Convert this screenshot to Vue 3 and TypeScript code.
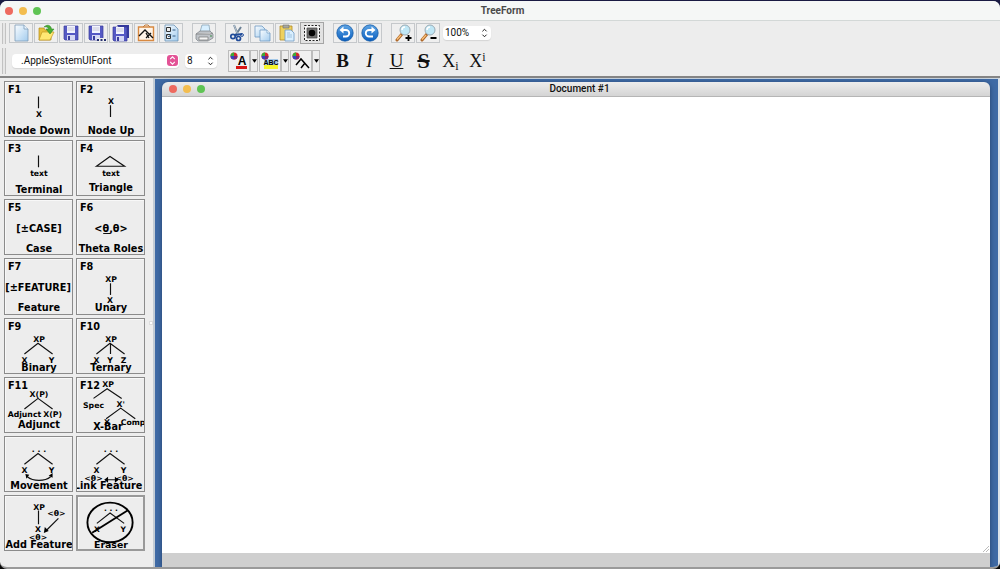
<script setup lang="ts">
import { ref } from 'vue'

interface Tool { name: string; art: string; gap?: boolean; pressed?: boolean }
interface Label { x: number; y: number; t: string; s?: 'big'; start?: boolean }
interface Cell { name: string; key?: string; labels: Label[]; path?: string; extra?: string; caption: Label; pressed?: boolean }

const disk = '<path d="M5 3h14v14H6l-1-1z" fill="#5559c4" stroke="#3a3e9c" stroke-width=".7"/><path d="M8 3h8v7H8z" fill="#f2f4ff"/><path d="M8.500 5h7M8.500 7h7" stroke="#aab" stroke-width=".6"/><path d="M8 12h8v5H8z" fill="#d5d8f4"/><path d="M9 13h2v4H9z" fill="#3a3e9c"/>'
const lens = '<path d="M11 11l-5 6" stroke="#b06a2c" stroke-width="3" stroke-linecap="round"/><path d="M10 12l-4 4.500" stroke="#f8c07a" stroke-width="1.300"/><circle cx="14" cy="7" r="5" fill="#bfe7f6" stroke="#9aabb5"/><path d="M11 7a3 3 0 013-3" stroke="#fff" stroke-width="1.500" fill="none"/>'
const orb = '<circle cx="12" cy="10" r="8.200" fill="url(#orb)" stroke="#0b53a0" stroke-width=".7"/>'

const tools: Tool[] = [
  { name: 'New', art: '<path d="M6 2h9l4 4v12H6z" fill="url(#sheet)" stroke="#7f9db8" stroke-width=".8"/><path d="M15 2v4h4" fill="#e9f5ff" stroke="#7f9db8" stroke-width=".8"/>' },
  { name: 'Open', art: '<path d="M5 5h5l1 2h6v10H5z" fill="#e9c23e" stroke="#b68b19" stroke-width=".7"/><path d="M5 17l3-8h12l-4 8z" fill="#ffe873" stroke="#c29a22" stroke-width=".7"/><path d="M10 4c3-3 7-2 7.500 2h2.500L16 11l-4-5h2.500c-.5-2-2-2.500-4.500-2z" fill="#48ae35" stroke="#27801e" stroke-width=".5"/>' },
  { name: 'Save', art: disk },
  { name: 'Save as', art: disk + '<path d="M13 15h9v4h-9z" fill="#eee"/><path d="M13 16h2v2h-2zM16.500 16h2v2h-2zM20 16h2v2h-2z" fill="#26306f"/>' },
  { name: 'Save all', art: '<path d="M8 2h12v13h-3z" fill="#353a9d"/><g transform="translate(-1 1)">' + disk + '</g>' },
  { name: 'Save image', art: '<path d="M4.500 4h15v13.500h-15z" fill="#fff4e8" stroke="#d88941" stroke-width="1.400"/><path d="M9 4l2-2h3l2 2" fill="none" stroke="#c17a3a"/><path d="M5 13l6-6 8 8M17 10l-5 5M12 10l3 5" fill="none" stroke="#111" stroke-width="1.300"/>' },
  { name: 'Properties', art: '<path d="M6 2h9l4 4v12H6z" fill="url(#sheet)" stroke="#6b92b5" stroke-width=".8"/><path d="M7.500 4.500h4v4h-4zM7.500 11.500h4v4h-4z" fill="#eee" stroke="#333"/><path d="M13.500 7h3M13.500 13h3M8.500 12.500l1.500 1.500 2-3" fill="none" stroke="#345d85"/>' },
  { name: 'Print', gap: true, art: '<path d="M8 9l2-7h7l1 7z" fill="#d7efff" stroke="#7e9caf" stroke-width=".7"/><path d="M4 11l4-3h10l3 3v4l-5 3H6l-2-2z" fill="#bfc3c8" stroke="#7a8085" stroke-width=".7"/><path d="M4 11h14l3-1M7 14h9v3H7z" fill="#f5f5f5" stroke="#777" stroke-width=".7"/><path d="M18 13h2" stroke="#368b45"/>' },
  { name: 'Cut', gap: true, art: '<path d="M9 2l4 10M16 4l-6 9" stroke="#6b8095" stroke-width="2"/><path d="M9 2l4 10" stroke="#d9e3eb" stroke-width=".7"/><circle cx="8" cy="13.500" r="2.200" fill="none" stroke="#214c9a" stroke-width="1.700"/><circle cx="13.500" cy="15.500" r="2" fill="none" stroke="#214c9a" stroke-width="1.700"/><path d="M10 12l7-1" stroke="#214c9a" stroke-width="2"/><circle cx="17" cy="12" r="1.400" fill="none" stroke="#214c9a"/>' },
  { name: 'Copy', art: '<path d="M5 3h7l3 3v8H5z" fill="url(#sheet)" stroke="#6e9bc3" stroke-width=".8"/><path d="M10 7h7l3 3v8H10z" fill="url(#sheet)" stroke="#6e9bc3" stroke-width=".8"/><path d="M17 7v3h3" fill="#fff" stroke="#6e9bc3" stroke-width=".7"/>' },
  { name: 'Paste', art: '<path d="M5 3h12v14H5z" fill="#eed15e" stroke="#b18a27" stroke-width=".8"/><path d="M8 2h6v3H8z" fill="#a8a8a0" stroke="#70706a" stroke-width=".6"/><path d="M10 7h6l3 3v8h-9z" fill="#d9efff" stroke="#6e9bc3" stroke-width=".8"/><path d="M12 10h3M12 12h5M12 14h5" stroke="#8bb1d1" stroke-width=".7"/>' },
  { name: 'Select all', pressed: true, art: '<path d="M4.500 2.500h15v15h-15z" fill="#f5f5f5" stroke="#222" stroke-dasharray="2 1.500"/><path d="M7 5h10v10H7z" fill="#727272" stroke="#444" stroke-width=".7"/><circle cx="12" cy="10" r="3.300" fill="#050505"/>' },
  { name: 'Undo', gap: true, art: orb + '<path d="M9 7h4a3.200 3.200 0 010 6.500h-3" fill="none" stroke="#fff" stroke-width="1.800"/><path d="M10.500 3.500v7L6.500 7z" fill="#fff"/>' },
  { name: 'Redo', art: orb + '<path d="M15 7h-4a3.200 3.200 0 000 6.500h4" fill="none" stroke="#fff" stroke-width="1.800"/><path d="M13.500 3.500v7l4-3.500z" fill="#fff"/>' },
  { name: 'Zoom in', gap: true, art: lens + '<path d="M17.500 12v6M14.500 15h6" stroke="#000" stroke-width="1.800"/>' },
  { name: 'Zoom out', art: lens + '<path d="M14.500 15h6" stroke="#000" stroke-width="1.800"/>' },
]

const wheel = '<circle cx="5" cy="5" r="3.500" fill="#d52a2a"/><path d="M5 5V1.500A3.500 3.500 0 001.500 5z" fill="#3caa38"/><path d="M5 5H1.500A3.500 3.500 0 005 8.500z" fill="#3545bd"/><path d="M5 5v3.500A3.500 3.500 0 008.500 5z" fill="#7c267c"/>'
const colourTools = [
  { name: 'Text colour', art: wheel + '<path d="M7 15h11v3H7z" fill="#d81515"/>', text: 'A', size: 12, x: 13, y: 14 },
  { name: 'Highlight colour', art: '<path d="M4 8h14v6H4z" fill="#a4c8e8"/><path d="M4 14h14v4H4z" fill="#f5f52b"/>' + wheel, text: 'ABC', size: 7, x: 11, y: 14 },
  { name: 'Line colour', art: wheel + '<path d="M5 14l5-6 8 9M14 12l-4 5" fill="none" stroke="#000" stroke-width="1.500"/>', text: '', size: 10, x: 0, y: 0 },
]

const formats = [
  { name: 'Bold', cls: 'b', text: 'B' },
  { name: 'Italic', cls: 'i', text: 'I' },
  { name: 'Underline', cls: 'u', text: 'U' },
  { name: 'Strikethrough', cls: 's', text: 'S' },
]

const cells: Cell[] = [
  { name: 'Node Down', key: 'F1', path: 'M34.500 15v12', labels: [{ x: 35, y: 36, t: 'X' }], caption: { x: 35, y: 54, t: 'Node Down' } },
  { name: 'Node Up', key: 'F2', path: 'M34.500 24v12', labels: [{ x: 35, y: 23, t: 'X' }], caption: { x: 35, y: 54, t: 'Node Up' } },
  { name: 'Terminal', key: 'F3', path: 'M34.500 15v12', labels: [{ x: 35, y: 36, t: 'text' }], caption: { x: 35, y: 54, t: 'Terminal' } },
  { name: 'Triangle', key: 'F4', path: 'M20 26l14-10 15 10z', labels: [{ x: 35, y: 36, t: 'text' }], caption: { x: 35, y: 52, t: 'Triangle' } },
  { name: 'Case', key: 'F5', labels: [{ x: 35, y: 33, t: '[±CASE]' }].map((l) => ({ ...l, s: 'big' as const })), caption: { x: 35, y: 54, t: 'Case' } },
  { name: 'Theta Roles', key: 'F6', path: 'M27 34.500h7', labels: [{ x: 35, y: 33, t: '<θ,θ>', s: 'big' }], caption: { x: 35, y: 54, t: 'Theta Roles' } },
  { name: 'Feature', key: 'F7', labels: [{ x: 34, y: 33, t: '[±FEATURE]', s: 'big' }], caption: { x: 35, y: 54, t: 'Feature' } },
  { name: 'Unary', key: 'F8', path: 'M34.500 25v12', labels: [{ x: 35, y: 24, t: 'XP' }, { x: 34, y: 45, t: 'X' }], caption: { x: 35, y: 54, t: 'Unary' } },
  { name: 'Binary', key: 'F9', path: 'M20 36l14-11 15 11', labels: [{ x: 35, y: 24, t: 'XP' }, { x: 20, y: 45, t: 'X' }, { x: 48, y: 45, t: 'Y' }], caption: { x: 35, y: 54, t: 'Binary' } },
  { name: 'Ternary', key: 'F10', path: 'M20 36l14-11 15 11M34.500 25v11', labels: [{ x: 35, y: 24, t: 'XP' }, { x: 20, y: 45, t: 'X' }, { x: 34, y: 45, t: 'Y' }, { x: 48, y: 45, t: 'Z' }], caption: { x: 35, y: 54, t: 'Ternary' } },
  { name: 'Adjunct', key: 'F11', path: 'M20 32l14-11 15 11', labels: [{ x: 35, y: 20, t: 'X(P)' }, { x: 20, y: 40, t: 'Adjunct' }, { x: 49, y: 40, t: 'X(P)' }], caption: { x: 35, y: 52, t: 'Adjunct' } },
  { name: 'X-Bar', key: 'F12', path: 'M17 21l14-10 15 10M30 42l15-11 15 11', labels: [{ x: 32, y: 9, t: 'XP' }, { x: 17, y: 31, t: 'Spec' }, { x: 45, y: 30, t: 'X\'' }, { x: 31, y: 48, t: 'X' }, { x: 45, y: 48, t: 'Comp', start: true }], caption: { x: 32, y: 54, t: 'X-Bar' } },
  { name: 'Movement', path: 'M20 28l14-11 15 11M23 41c6 5 18 5 24 0', extra: 'M21 38l4 1-3 4zM49 37v5l-4-2z', labels: [{ x: 35, y: 15, t: '. . .' }, { x: 20, y: 37, t: 'X' }, { x: 48, y: 37, t: 'Y' }], caption: { x: 35, y: 54, t: 'Movement' } },
  { name: 'Link Feature', path: 'M20 28l14-11 15 11M30 44h11', extra: 'M28 44l4-3v6zM43 44l-4-3v6z', labels: [{ x: 35, y: 15, t: '. . .' }, { x: 20, y: 37, t: 'X' }, { x: 48, y: 37, t: 'Y' }, { x: 17, y: 45, t: '<θ>' }, { x: 49, y: 45, t: '<θ>' }], caption: { x: 32, y: 54, t: 'Link Feature' } },
  { name: 'Add Feature', path: 'M34.500 15v14M55 23L43 35', extra: 'M40 38l1-6 4 4z', labels: [{ x: 35, y: 14, t: 'XP' }, { x: 34, y: 37, t: 'X' }, { x: 34, y: 45, t: '<θ>' }, { x: 53, y: 21, t: '<θ>' }], caption: { x: 35, y: 54, t: 'Add Feature' } },
  { name: 'Eraser', pressed: true, path: 'M20 28l14-11 15 11', labels: [{ x: 35, y: 15, t: '. . .' }, { x: 20, y: 37, t: 'X' }, { x: 48, y: 37, t: 'Y' }], caption: { x: 35, y: 54, t: 'Eraser' } },
]

const font = ref('.AppleSystemUIFont')
const size = ref('8')
const zoom = ref('100%')
</script>

<template>
  <div class="desk">
    <svg class="defs" aria-hidden="true">
      <defs>
        <linearGradient id="sheet" x1="0" y1="0" x2="1" y2="1"><stop offset="0" stop-color="#fafdff" /><stop offset="1" stop-color="#a3ccee" /></linearGradient>
        <linearGradient id="orb" x1="0" y1="0" x2="0" y2="1"><stop offset="0" stop-color="#5fa5e4" /><stop offset="1" stop-color="#0a5fc0" /></linearGradient>
      </defs>
    </svg>
    <main class="app">
      <header class="title">
        <div class="lights"><i class="red"></i><i class="amber"></i><i class="green"></i></div>
        <h1>TreeForm</h1>
      </header>

      <div class="bars">
        <div class="bar">
          <span class="grip"></span>
          <button v-for="t in tools" :key="t.name" class="tool" :class="{ gap: t.gap, pressed: t.pressed }" :aria-label="t.name">
            <svg viewBox="1 1 22 18" v-html="t.art"></svg>
          </button>
          <span class="pick zoom">
            <select v-model="zoom" aria-label="Zoom"><option>100%</option><option>200%</option></select>
            <svg viewBox="0 0 8 12"><path d="M1.500 4L4 1.500 6.500 4M1.500 8L4 10.500 6.500 8" /></svg>
          </span>
        </div>
        <div class="bar">
          <span class="grip"></span>
          <span class="pick font">
            <select v-model="font" aria-label="Font"><option>.AppleSystemUIFont</option></select>
            <svg viewBox="0 0 8 12"><path d="M1.500 4.500L4 2 6.500 4.500M1.500 7.500L4 10 6.500 7.500" /></svg>
          </span>
          <span class="pick size">
            <select v-model="size" aria-label="Font size"><option>8</option><option>10</option><option>12</option></select>
            <svg viewBox="0 0 8 12"><path d="M1.500 4L4 1.500 6.500 4M1.500 8L4 10.500 6.500 8" /></svg>
          </span>
          <div class="colours">
            <template v-for="c in colourTools" :key="c.name">
              <button class="colour" :aria-label="c.name">
                <svg viewBox="0 0 20 20"><g v-html="c.art"></g><text v-if="c.text" :x="c.x" :y="c.y" :font-size="c.size">{{ c.text }}</text></svg>
              </button>
              <button class="arrow" :aria-label="c.name + ' menu'"><svg viewBox="0 0 6 4"><path d="M0 0h6L3 4z" /></svg></button>
            </template>
          </div>
          <div class="formats">
            <button v-for="f in formats" :key="f.name" :class="f.cls" :aria-label="f.name">{{ f.text }}</button>
            <button class="script" aria-label="Subscript">X<sub>i</sub></button>
            <button class="script" aria-label="Superscript">X<sup>i</sup></button>
          </div>
        </div>
      </div>

      <div class="work">
        <aside class="palette">
          <button v-for="c in cells" :key="c.name" class="cell" :class="{ pressed: c.pressed }" :aria-label="c.name">
            <svg viewBox="0 0 69 56" preserveAspectRatio="xMidYMin slice">
              <text v-if="c.key" class="caption start" x="3" y="11">{{ c.key }}</text>
              <path v-if="c.path" class="line" :d="c.path" />
              <path v-if="c.extra" :d="c.extra" />
              <text v-for="(l, n) in c.labels" :key="n" :x="l.x" :y="l.y" :class="[l.s, { start: l.start }]">{{ l.t }}</text>
              <g v-if="c.name === 'Eraser'" class="ban"><ellipse cx="34" cy="27" rx="24" ry="21" /><path d="M15 38L53 14" /></g>
              <text class="caption" :x="c.caption.x" :y="c.caption.y">{{ c.caption.t }}</text>
            </svg>
          </button>
        </aside>
        <div class="divider"><i></i></div>
        <section class="canvas">
          <article class="doc">
            <header>
              <div class="lights"><i class="red"></i><i class="amber"></i><i class="green"></i></div>
              <h2>Document #1</h2>
            </header>
            <div class="page">
              <svg viewBox="0 0 8 8"><path d="M1 7l6-6M4 7l3-3" /></svg>
            </div>
            <footer></footer>
          </article>
        </section>
      </div>
    </main>
  </div>
</template>

<style>
body { margin: 0; }
</style>

<style scoped>
* { box-sizing: border-box; }
.desk { height: 100vh; padding-top: 1px; background: linear-gradient(#1a1b43 60%, #080808 90%); font-family: "Noto Sans", sans-serif; color: #111; }
.defs { position: absolute; width: 0; height: 0; }
.app { display: flex; flex-direction: column; height: 100%; overflow: hidden; border-radius: 7px; background: #ededed; border-bottom: 2px solid #9a9a9a; }
button { padding: 0; margin: 0; font: inherit; color: inherit; background: none; border: 0; }
svg { display: block; }
h1, h2 { margin: 0; }
.title { display: grid; grid-template-columns: 1fr auto 1fr; align-items: center; height: 20px; flex: none; padding-left: 5px; background: #f5f7f6; border-bottom: 1px solid #d3d8d7; }
.title h1 { font: 700 10px/18px Roboto, sans-serif; color: #4a4a4a; }
.lights { display: flex; gap: 6px; }
.lights i { width: 8px; height: 8px; border-radius: 50%; }
.red { background: #ee6a5f; }
.amber { background: #f3bd4f; }
.green { background: #5fc454; }
.bars { flex: none; padding: 0 2px; border-bottom: 2px solid #858585; }
.bar { display: flex; align-items: center; height: 24px; }
.bar + .bar { height: 31px; }
.grip { flex: none; width: 4px; height: 21px; margin-right: 3px; border: 1px solid #c2c2c2; border-width: 0 1px; background: #e6e6e6; }
.bar + .bar .grip { height: 26px; }
.tool { flex: none; width: 24px; height: 20px; margin-right: 1px; border: 1px solid #c5c8cb; background: #efefef; }
.tool svg { width: 22px; height: 18px; }
.tool.gap { margin-left: 8px; }
.tool.pressed { width: 24px; height: 22px; border-color: #a5a5a5; background: #e2e2e2; }
.tool.pressed svg { height: 20px; }
.pick { position: relative; display: flex; flex: none; align-items: center; }
.pick select { width: 100%; height: 14px; padding: 0 0 0 2px; border: 0; border-radius: 4px; background: #fff; appearance: none; font: 10px/14px Roboto, sans-serif; color: #111; box-shadow: 0 1px 1px #d4d4d4; }
.pick svg { position: absolute; right: 3px; width: 7px; height: 10px; pointer-events: none; }
.pick path { fill: none; stroke: #222; stroke-width: 1.2; }
.zoom { width: 48px; margin-left: 2px; }
.font { width: 167px; margin-left: 3px; }
.pick.font select { padding-left: 9px; }
.font svg { right: 1px; width: 11px; height: 11px; border-radius: 3px; background: #e35396; }
.font path { stroke: #fff; }
.size { width: 32px; margin-left: 6px; }
.colours { display: flex; flex: none; margin-left: 11px; }
.colour { width: 22px; height: 22px; border: 1px solid #bcbcbc; background: #f0f0f0; }
.colour text { font-family: "Liberation Sans", sans-serif; font-weight: 700; text-anchor: middle; }
.arrow { display: flex; align-items: center; justify-content: center; width: 8px; height: 22px; margin-right: 1px; border: 1px solid #bcbcbc; }
.arrow svg { width: 5px; height: 4px; flex: none; }
.formats { display: flex; margin-left: 8px; font: 19px/24px "Liberation Serif", serif; }
.formats button { width: 27px; height: 24px; white-space: nowrap; }
.formats .b { font-weight: 700; }
.formats .i { font-style: italic; }
.formats .u { text-decoration: underline; text-decoration-thickness: 1px; }
.formats .s { font-size: 22px; font-weight: 700; text-decoration: line-through; text-decoration-thickness: 2px; }
.formats .script { font-size: 18px; }
sub, sup { font-size: 12px; line-height: 0; }
sub { vertical-align: -3px; }
sup { vertical-align: 6px; }
.work { display: flex; flex: 1; min-height: 0; }
.palette { display: grid; flex: none; width: 149px; padding: 3px 4px 16px; grid-template-columns: 1fr 1fr; grid-template-rows: repeat(8, 1fr); gap: 3px; }
.cell { min-height: 0; overflow: hidden; border: 1px solid #8b8b8b; box-shadow: inset 1px 1px #f8f8f8; }
.cell.pressed { border-width: 2px; border-color: #999; }
.cell svg { width: 100%; height: 100%; }
.cell text { font-family: "DejaVu Sans", sans-serif; font-size: 8px; font-weight: 700; text-anchor: middle; }
.cell .caption, .cell .big { font-size: 10px; }
.cell .start { text-anchor: start; }
.line { fill: none; stroke: #111; stroke-width: 1.2; }
.ban { fill: none; stroke: #000; stroke-width: 2; }
.divider { display: flex; align-items: center; flex: none; width: 6px; border-right: 2px solid #c3ccd5; }
.divider i { width: 4px; height: 4px; border: 1px solid #ddd; background: #fff; }
.canvas { flex: 1; min-width: 0; padding: 3px 8px 0 7px; border-top: 1px solid #c9d4df; border-right: 2px solid #dce3ea; background: #3f6aa5; }
.doc { display: flex; flex-direction: column; height: 100%; border-radius: 6px 6px 0 0; overflow: hidden; box-shadow: 0 1px 5px #24406c; }
.doc header { display: grid; grid-template-columns: 1fr auto 1fr; align-items: center; flex: none; height: 15px; padding-left: 7px; border-bottom: 1px solid #b5b5b5; background: linear-gradient(#ececec, #d4d4d4); }
.doc h2 { font: 500 10px/14px Roboto, sans-serif; }
.page { display: flex; flex: 1; align-items: flex-end; justify-content: flex-end; background: #fff; }
.page svg { width: 8px; height: 8px; }
.page path { stroke: #aaa; stroke-width: .8; }
.doc footer { flex: none; height: 14px; background: #cfcfcf; }
</style>
